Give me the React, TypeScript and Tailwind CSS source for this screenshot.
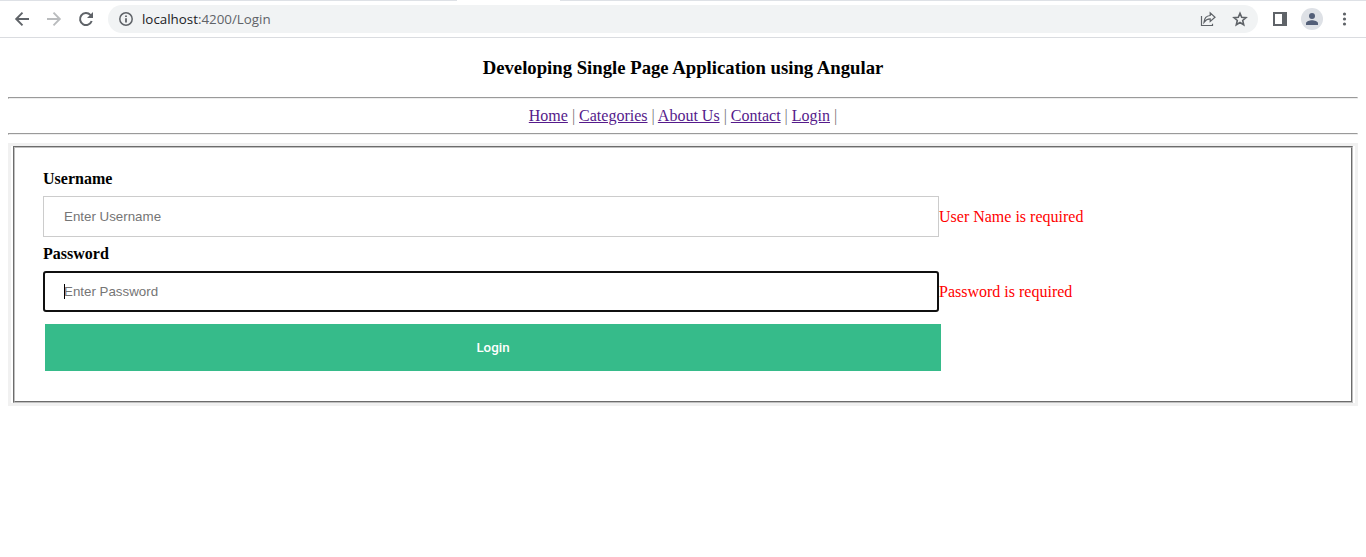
import React from 'react';

const links = ['Home', 'Categories', 'About Us', 'Contact', 'Login'];

function Toolbar() {
  return (
    <header className="flex h-[38px] flex-col border-b border-[#dadce0] bg-white font-['Open_Sans',sans-serif]">
      <div className="flex h-px justify-between">
        <div className="w-[457px] bg-[#dee1e6]" />
        <div className="w-[806px] bg-[#dee1e6]" />
      </div>
      <div className="flex h-9 items-center">
        <svg className="ml-[14px] size-4 shrink-0" viewBox="0 0 16 16" fill="none" stroke="#5f6368" strokeWidth="1.9">
          <path d="M15 8H2.5M8.500 1.700 2.200 8l6.300 6.300" />
        </svg>
        <svg className="ml-4 size-4 shrink-0" viewBox="0 0 16 16" fill="none" stroke="#babcbe" strokeWidth="1.9">
          <path d="M1 8h12.500M7.500 1.700 13.800 8l-6.300 6.300" />
        </svg>
        <svg className="ml-4 size-4 shrink-0" viewBox="0 0 16 16" fill="none" stroke="#5f6368" strokeWidth="2">
          <path d="M13.700 10A6 6 0 1 1 12.400 3.900L14 5.500" />
          <path d="M15 1v6H9z" fill="#5f6368" stroke="none" />
        </svg>
        <div className="ml-[14px] flex h-7 w-[1150px] items-center rounded-full bg-[#f1f3f4]">
          <svg className="ml-[11px] size-[14px]" viewBox="0 0 14 14" fill="none" stroke="#5f6368" strokeWidth="1.500">
            <circle cx="7" cy="7" r="6.200" />
            <path d="M7 6.200v4.300M7 3.500V5" strokeWidth="1.800" />
          </svg>
          <span className="ml-[9px] text-[13.35px] leading-7 text-[#5f6368]">
            <span className="text-[#202124]">localhost</span>:4200/Login
          </span>
          <svg className="ml-auto size-4" viewBox="0 0 16 16" fill="none" stroke="#5f6368" strokeWidth="1.200">
            <path d="M1.500 5v9.500h11v-1.800" />
            <path d="M4 11.300c.3-4.300 2.300-6.500 6.200-6.800V1.900L15 6.300l-4.800 4.200V7.900C7.300 8 5.500 9.100 4 11.300z" />
          </svg>
          <svg className="ml-4 mr-[10px] size-4" viewBox="0 0 16 16" fill="none" stroke="#5f6368" strokeWidth="1.600">
            <path d="m8 2.200 1.700 4 4.300.4-3.300 2.900 1 4.300L8 11.500l-3.700 2.300 1-4.300L2 6.600l4.300-.4z" />
          </svg>
        </div>
        <svg className="ml-[15px] size-[14px]" viewBox="0 0 14 14" fill="#5f6368">
          <path fillRule="evenodd" d="M0 0h14v14H0zM2 2v10h7V2z" />
        </svg>
        <svg className="ml-[14px] size-[22px]" viewBox="0 0 22 22">
          <circle cx="11" cy="11" r="11" fill="#dee1e6" />
          <circle cx="11" cy="8" r="3" fill="#535f78" />
          <path d="M5 17v-1.700C5 13.200 8.700 12.200 11 12.200s6 1 6 3.100V17z" fill="#535f78" />
        </svg>
        <svg className="ml-[13px] size-4" viewBox="0 0 16 16" fill="#5f6368">
          <circle cx="8.500" cy="3" r="1.600" />
          <circle cx="8.500" cy="8" r="1.600" />
          <circle cx="8.500" cy="13" r="1.600" />
        </svg>
      </div>
    </header>
  );
}

function Rule() {
  return <div className="h-[2px] border border-b-[#eeeeee] border-l-[#9a9a9a] border-r-[#eeeeee] border-t-[#9a9a9a]" />;
}

export default function App() {
  return (
    <div className="h-[557px] overflow-hidden bg-white text-black">
      <Toolbar />
      <main className="px-2 font-['Liberation_Serif',serif] text-[16px] leading-[18px]">
        <h3 className="flex h-[59px] items-center justify-center text-[18.72px] font-bold leading-[21px]">
          Developing Single Page Application using Angular
        </h3>
        <Rule />
        <nav className="h-[34px] pt-2 text-center text-[#777777]">
          {links.map((l) => (
            <React.Fragment key={l}>
              <a href="#" className="text-[#551a8b] underline">{l}</a>
              {' | '}
            </React.Fragment>
          ))}
        </nav>
        <Rule />
        <form className="mt-2 border-[3px] border-[#f1f1f1]">
          <fieldset className="mx-[2px] h-[257px] border-2 border-[#c0c0c0] pl-7 pt-[22px] [border-style:groove]">
            <label className="block h-[18px] font-bold" htmlFor="user">Username</label>
            <div className="mt-2 flex items-center">
              <input id="user" className="h-[41px] w-[896px] border border-[#cccccc] px-5 font-['Liberation_Sans',sans-serif] text-[13.333px] outline-none placeholder:text-[#757575]" placeholder="Enter Username" />
              <span className="text-[#ff0000]">User Name is required</span>
            </div>
            <label className="mt-2 block h-[18px] font-bold" htmlFor="pass">Password</label>
            <div className="mt-2 flex items-center">
              <div className="relative">
                <input id="pass" type="password" className="block h-[41px] w-[896px] rounded-[3px] border-2 border-[#101010] px-[19px] font-['Liberation_Sans',sans-serif] text-[13.333px] outline-none placeholder:text-[#757575]" placeholder="Enter Password" />
                <span className="absolute left-[21px] top-[13px] h-[15px] w-px bg-black" />
              </div>
              <span className="text-[#ff0000]">Password is required</span>
            </div>
            <button type="button" className="ml-[2px] mt-3 block h-[47px] w-[896px] bg-[#36bb8a] font-['Roboto',sans-serif] text-[13.333px] font-medium text-white">
              Login
            </button>
          </fieldset>
        </form>
      </main>
    </div>
  );
}
